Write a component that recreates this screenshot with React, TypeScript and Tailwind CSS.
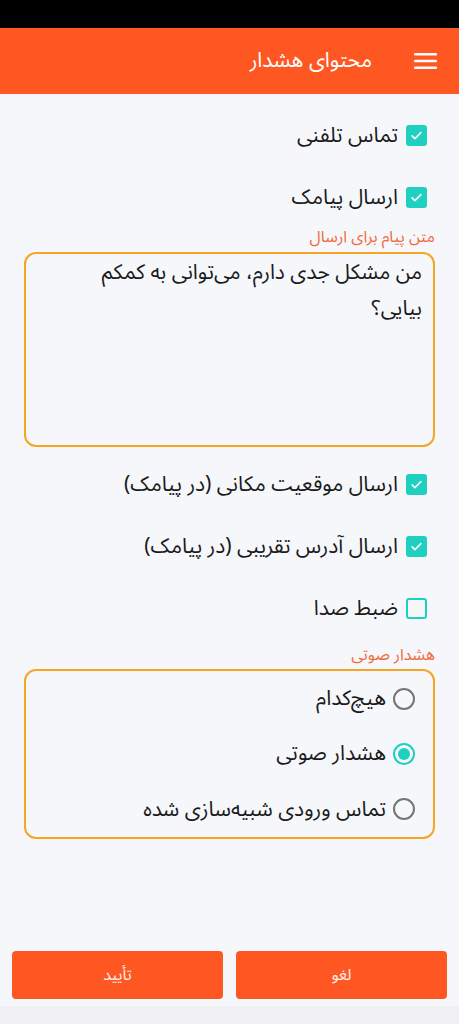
import React from "react";

const font = { fontFamily: '"Noto Sans Arabic", "Vazirmatn", "DejaVu Sans", "Noto Sans", sans-serif' };

function CheckRow({ label, checked }: { label: string; checked: boolean }) {
  return (
    <div className="flex h-[62px] items-center gap-[8px] pr-[32px]">
      {checked ? (
        <div className="flex h-[21px] w-[21px] items-center justify-center rounded-[3px] bg-[#1fd0c1]">
          <svg width="15" height="15" viewBox="0 0 24 24" fill="none" stroke="white" strokeWidth="2.6" strokeLinecap="round" strokeLinejoin="round">
            <path d="M5 12.5l4.5 4.5L19 7.5" />
          </svg>
        </div>
      ) : (
        <div className="h-[21px] w-[21px] rounded-[3px] border-[2px] border-[#1fd0c1]" />
      )}
      <span className="text-[21px] leading-none text-[#1a1a1a]">{label}</span>
    </div>
  );
}

function RadioRow({ label, selected }: { label: string; selected: boolean }) {
  return (
    <div className="flex h-[57px] items-center gap-[7px] pr-[18px]">
      {selected ? (
        <div className="flex h-[22px] w-[22px] items-center justify-center rounded-full border-[2px] border-[#1fd0c1]">
          <div className="h-[12px] w-[12px] rounded-full bg-[#1fd0c1]" />
        </div>
      ) : (
        <div className="h-[22px] w-[22px] rounded-full border-[2px] border-[#757575]" />
      )}
      <span className="text-[21px] leading-none text-[#1a1a1a]">{label}</span>
    </div>
  );
}

export default function App() {
  return (
    <div dir="rtl" style={font} className="flex h-[1024px] w-[459px] flex-col overflow-hidden bg-[#f5f7fa]">
      <div className="h-[28px] bg-black" />
      <div className="flex h-[66px] items-center gap-[42px] bg-[#ff5722] pr-[22px]">
        <svg width="23" height="16" viewBox="0 0 23 16" fill="white">
          <rect x="0" y="0" width="23" height="2.5" rx="1" />
          <rect x="0" y="6.8" width="23" height="2.5" rx="1" />
          <rect x="0" y="13.5" width="23" height="2.5" rx="1" />
        </svg>
        <span className="text-[21px] text-white">محتوای هشدار</span>
      </div>

      <div className="flex flex-col pt-[10px]">
        <CheckRow label="تماس تلفنی" checked />
        <CheckRow label="ارسال پیامک" checked />
        <div className="h-[18px] pr-[24px] text-[16px] leading-[18px] text-[#f26a3c]">متن پیام برای ارسال</div>
        <div className="mx-[24px] mt-[6px] h-[195px] rounded-[12px] border-[2px] border-[#f5a623] pl-[40px] pr-[11px] text-[21px] leading-[36px] text-[#1a1a1a]">
          من مشکل جدی دارم، می‌توانی به کمکم بیایی؟
        </div>
        <div className="h-[6px]" />
        <CheckRow label="ارسال موقعیت مکانی (در پیامک)" checked />
        <CheckRow label="ارسال آدرس تقریبی (در پیامک)" checked />
        <CheckRow label="ضبط صدا" checked={false} />
        <div className="mt-[7px] h-[18px] pr-[24px] text-[16px] leading-[18px] text-[#f26a3c]">هشدار صوتی</div>
        <div className="mx-[24px] mt-[5px] flex h-[170px] flex-col justify-center rounded-[12px] border-[2px] border-[#f5a623]">
          <RadioRow label="هیچ‌کدام" selected={false} />
          <RadioRow label="هشدار صوتی" selected />
          <RadioRow label="تماس ورودی شبیه‌سازی شده" selected={false} />
        </div>
      </div>

      <div className="flex-1" />
      <div className="flex gap-[13px] px-[12px] pb-[7px]">
        <button className="flex h-[48px] flex-1 items-center justify-center rounded-[4px] bg-[#ff5722] text-[16px] text-white/90">لغو</button>
        <button className="flex h-[48px] flex-1 items-center justify-center rounded-[4px] bg-[#ff5722] text-[16px] text-white/90">تأیید</button>
      </div>
      <div className="h-[18px] bg-[#f1f1f3]" />
    </div>
  );
}
